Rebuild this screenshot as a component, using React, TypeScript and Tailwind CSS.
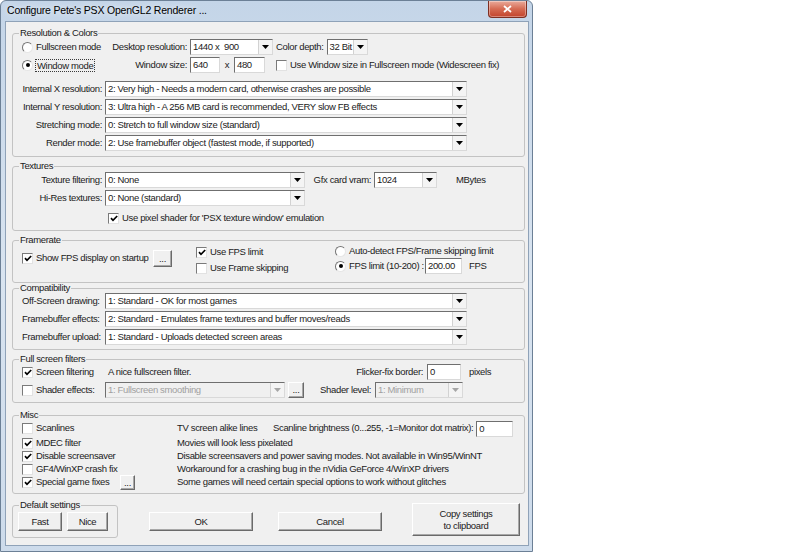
import React from "react";

type Kids = { children?: React.ReactNode; className?: string };

const Arrow = ({ disabled }: { disabled?: boolean }) => (
  <svg width="7" height="4" viewBox="0 0 7 4">
    <path d="M0 0h7L3.5 4z" fill={disabled ? "#a6a6a6" : "#000"} />
  </svg>
);

const Select = ({
  value,
  className = "",
  disabled = false,
}: {
  value: string;
  className?: string;
  disabled?: boolean;
}) => (
  <div
    className={`flex h-[16px] shrink-0 border border-t-[#6f6f6f] border-l-[#6f6f6f] border-r-[#d9d9d9] border-b-[#d9d9d9] ${
      disabled ? "bg-[#f0f0f0] text-[#a0a0a0]" : "bg-white"
    } ${className}`}
  >
    <div className="flex-1 overflow-hidden whitespace-pre pl-[2px] leading-[14px]">
      {value}
    </div>
    <div className="flex w-[14px] items-center justify-center border-l border-[#d2d2d2] bg-[#f4f4f4]">
      <Arrow disabled={disabled} />
    </div>
  </div>
);

const TextBox = ({ value, className = "" }: { value: string; className?: string }) => (
  <div
    className={`h-[16px] shrink-0 border border-t-[#6f6f6f] border-l-[#6f6f6f] border-r-[#d9d9d9] border-b-[#d9d9d9] bg-white pl-[2px] leading-[14px] ${className}`}
  >
    {value}
  </div>
);

const Check = ({ checked = false, label }: { checked?: boolean; label: string }) => (
  <div className="flex items-center">
    <div className="flex h-[11px] w-[11px] shrink-0 items-center justify-center border border-t-[#7a7a7a] border-l-[#7a7a7a] border-r-[#e2e2e2] border-b-[#e2e2e2] bg-white">
      {checked && (
        <svg width="8" height="7" viewBox="0 0 8 7">
          <path d="M1 3.2l2 2.1L7.2 1" stroke="#000" strokeWidth="1.7" fill="none" />
        </svg>
      )}
    </div>
    <span className="ml-[3px] whitespace-nowrap">{label}</span>
  </div>
);

const Radio = ({
  checked = false,
  focus = false,
  label,
}: {
  checked?: boolean;
  focus?: boolean;
  label: string;
}) => (
  <div className="flex items-center">
    <div className="flex h-[11px] w-[11px] shrink-0 items-center justify-center rounded-full border border-t-[#747474] border-l-[#747474] border-r-[#e6e6e6] border-b-[#e6e6e6] bg-white">
      {checked && <div className="h-[4px] w-[4px] rounded-full bg-black" />}
    </div>
    <span
      className={`ml-[2px] whitespace-nowrap ${
        focus ? "border border-dotted border-[#3a3a3a] px-[1px] leading-[11px]" : "px-[1px]"
      }`}
    >
      {label}
    </span>
  </div>
);

const Btn = ({ children, className = "" }: Kids) => (
  <div
    className={`flex shrink-0 items-center justify-center border border-t-white border-l-white border-r-[#6a6a6a] border-b-[#6a6a6a] bg-[#f0f0f0] text-center leading-[12px] shadow-[inset_-1px_-1px_0_#a8a8a8] ${className}`}
  >
    {children}
  </div>
);

const Group = ({ title, children, className = "" }: Kids & { title: string }) => (
  <fieldset className={`w-[513px] rounded-[3px] border border-[#c3c3c3] px-[6px] ${className}`}>
    <legend className="px-[1px] leading-[10px]">{title}</legend>
    <div className="pl-[3px]">{children}</div>
  </fieldset>
);

const ComboRow = ({
  label,
  value,
  right = false,
  className = "",
}: {
  label: string;
  value: string;
  right?: boolean;
  className?: string;
}) => (
  <div className={`flex h-[16px] items-center ${className}`}>
    <span className={`w-[80px] whitespace-nowrap ${right ? "text-right" : ""}`}>{label}</span>
    <Select value={value} className="ml-[3px] w-[362px]" />
  </div>
);

const MiscRow = ({
  checked,
  label,
  text,
}: {
  checked?: boolean;
  label: string;
  text: string;
}) => (
  <div className="flex h-[13px] items-center">
    <div className="w-[155px]">
      <Check checked={checked} label={label} />
    </div>
    <span className="whitespace-nowrap">{text}</span>
  </div>
);

const CloseButton = () => (
  <div className="mr-[2px] flex h-[17px] w-[39px] items-center justify-center self-start rounded-b-[4px] border border-t-0 border-[#7e2f22] bg-gradient-to-b from-[#e9aa9b] via-[#d56a52] to-[#c2432c] shadow-[inset_0_0_0_1px_rgba(255,255,255,0.35)]">
    <svg width="9" height="8" viewBox="0 0 9 8">
      <path d="M1 1l7 6M8 1L1 7" stroke="#fff" strokeWidth="1.8" />
    </svg>
  </div>
);

export default function App() {
  return (
    <div className="h-[552px] w-[800px] bg-white font-['Liberation_Sans',Arial,sans-serif] text-[9.5px] tracking-[-0.35px] text-[#1b1b1b]">
      <div className="flex h-[552px] w-[533px] flex-col rounded-t-[6px] border border-[#6c8096] bg-gradient-to-b from-[#c4d5e8] via-[#d9e4f0] to-[#cddbeb] pb-[5px] pl-[4px] pr-[3px]">
        {/* title bar */}
        <div className="flex h-[20px] shrink-0 items-center justify-between">
          <span className="pl-[2px] text-[10.5px] tracking-[-0.2px] text-black [text-shadow:0_0_6px_#ffffff]">
            Configure Pete's PSX OpenGL2 Renderer ...
          </span>
          <CloseButton />
        </div>

        <div className="flex-1 border border-[#8fa2b8] bg-[#f0f0f0] pl-[6px] pt-[6px]">
          <Group title="Resolution & Colors" className="pb-[5px]">
            <div className="mt-[1px] flex h-[16px] items-center">
              <div className="w-[88px]">
                <Radio label="Fullscreen mode" />
              </div>
              <span className="w-[77px] whitespace-nowrap text-right">Desktop resolution:</span>
              <Select value="1440 x  900" className="ml-[3px] w-[83px]" />
              <span className="ml-[3px] whitespace-nowrap">Color depth:</span>
              <Select value="32 Bit" className="ml-[3px] w-[41px]" />
            </div>
            <div className="mt-[2px] flex h-[16px] items-center">
              <div className="w-[88px]">
                <Radio checked focus label="Window mode" />
              </div>
              <span className="w-[77px] whitespace-nowrap text-right">Window size:</span>
              <TextBox value="640" className="ml-[3px] w-[30px]" />
              <span className="w-[14px] text-center">x</span>
              <TextBox value="480" className="w-[31px]" />
              <div className="ml-[11px]">
                <Check label="Use Window size in Fullscreen mode (Widescreen fix)" />
              </div>
            </div>
            <ComboRow
              right
              className="mt-[8px]"
              label="Internal X resolution:"
              value="2: Very high - Needs a modern card, otherwise crashes are possible"
            />
            <ComboRow
              right
              className="mt-[2px]"
              label="Internal Y resolution:"
              value="3: Ultra high - A 256 MB card is recommended, VERY slow FB effects"
            />
            <ComboRow
              right
              className="mt-[2px]"
              label="Stretching mode:"
              value="0: Stretch to full window size (standard)"
            />
            <ComboRow
              right
              className="mt-[2px]"
              label="Render mode:"
              value="2: Use framebuffer object (fastest mode, if supported)"
            />
          </Group>

          <Group title="Textures" className="mt-[4px] pb-[5px]">
            <div className="mt-[1px] flex h-[16px] items-center">
              <span className="w-[80px] text-right">Texture filtering:</span>
              <Select value="0: None" className="ml-[3px] w-[200px]" />
              <span className="w-[66px] whitespace-nowrap text-right">Gfx card vram:</span>
              <Select value="1024" className="ml-[3px] w-[63px]" />
              <span className="ml-[19px]">MBytes</span>
            </div>
            <div className="mt-[2px] flex h-[16px] items-center">
              <span className="w-[80px] text-right">Hi-Res textures:</span>
              <Select value="0: None (standard)" className="ml-[3px] w-[200px]" />
            </div>
            <div className="mt-[5px] flex h-[14px] items-center pl-[86px]">
              <Check checked label="Use pixel shader for 'PSX texture window' emulation" />
            </div>
          </Group>

          <Group title="Framerate" className="mt-[4px] pb-[7px]">
            <div className="flex">
              <div className="mt-[5px] flex h-[17px] w-[131px] items-center">
                <Check checked label="Show FPS display on startup" />
              </div>
              <Btn className="mt-[5px] h-[17px] w-[19px]">...</Btn>
              <div className="ml-[24px] flex w-[139px] flex-col">
                <div className="flex h-[14px] items-center">
                  <Check checked label="Use FPS limit" />
                </div>
                <div className="mt-[2px] flex h-[14px] items-center">
                  <Check label="Use Frame skipping" />
                </div>
              </div>
              <div className="-mt-[1px] flex flex-col">
                <div className="flex h-[14px] items-center">
                  <Radio label="Auto-detect FPS/Frame skipping limit" />
                </div>
                <div className="flex h-[16px] items-center">
                  <div className="w-[90px]">
                    <Radio checked label="FPS limit (10-200) :" />
                  </div>
                  <TextBox value="200.00" className="w-[37px]" />
                  <span className="ml-[7px]">FPS</span>
                </div>
              </div>
            </div>
          </Group>

          <Group title="Compatibility" className="pb-[4px]">
            <ComboRow label="Off-Screen drawing:" value="1: Standard - OK for most games" />
            <ComboRow
              className="mt-[2px]"
              label="Framebuffer effects:"
              value="2: Standard - Emulates frame textures and buffer moves/reads"
            />
            <ComboRow
              className="mt-[2px]"
              label="Framebuffer upload:"
              value="1: Standard - Uploads detected screen areas"
            />
          </Group>

          <Group title="Full screen filters" className="mt-[4px] pb-[4px]">
            <div className="flex h-[16px] items-center">
              <div className="w-[86px]">
                <Check checked label="Screen filtering" />
              </div>
              <span className="w-[232px]">A nice fullscreen filter.</span>
              <span className="w-[83px] whitespace-nowrap text-right">Flicker-fix border:</span>
              <TextBox value="0" className="ml-[4px] w-[34px]" />
              <span className="ml-[8px]">pixels</span>
            </div>
            <div className="mt-[2px] flex h-[16px] items-center">
              <div className="w-[83px]">
                <Check label="Shader effects:" />
              </div>
              <Select disabled value="1: Fullscreen smoothing" className="w-[180px]" />
              <Btn className="ml-[3px] h-[16px] w-[16px]">...</Btn>
              <span className="w-[67px] whitespace-nowrap text-right">Shader level:</span>
              <Select disabled value="1: Minimum" className="ml-[4px] w-[88px]" />
            </div>
          </Group>

          <Group title="Misc" className="mt-[7px] pb-[4px]">
            <div className="flex h-[17px] items-center">
              <div className="w-[155px]">
                <Check label="Scanlines" />
              </div>
              <span className="w-[96px] whitespace-nowrap">TV screen alike lines</span>
              <span className="whitespace-nowrap">
                Scanline brightness (0...255, -1=Monitor dot matrix):
              </span>
              <TextBox value="0" className="ml-[3px] w-[37px]" />
            </div>
            <MiscRow checked label="MDEC filter" text="Movies will look less pixelated" />
            <MiscRow
              checked
              label="Disable screensaver"
              text="Disable screensavers and power saving modes. Not available in Win95/WinNT"
            />
            <MiscRow
              label="GF4/WinXP crash fix"
              text="Workaround for a crashing bug in the nVidia GeForce 4/WinXP drivers"
            />
            <div className="flex h-[13px] items-center">
              <div className="w-[98px]">
                <Check checked label="Special game fixes" />
              </div>
              <Btn className="h-[15px] w-[15px]">...</Btn>
              <span className="ml-[42px] whitespace-nowrap">
                Some games will need certain special options to work without glitches
              </span>
            </div>
          </Group>

          <div className="mt-[6px] flex items-start">
            <fieldset className="w-[106px] rounded-[3px] border border-[#c3c3c3] px-[6px] pb-[6px]">
              <legend className="px-[1px] leading-[10px]">Default settings</legend>
              <div className="-ml-[1px] mt-[2px] flex">
                <Btn className="h-[19px] w-[44px]">Fast</Btn>
                <Btn className="ml-[5px] h-[19px] w-[41px]">Nice</Btn>
              </div>
            </fieldset>
            <Btn className="ml-[31px] mt-[12px] h-[19px] w-[104px]">OK</Btn>
            <Btn className="ml-[25px] mt-[12px] h-[19px] w-[104px]">Cancel</Btn>
            <Btn className="ml-[30px] mt-[3px] h-[33px] w-[108px]">
              Copy settings
              <br />
              to clipboard
            </Btn>
          </div>
        </div>
      </div>
    </div>
  );
}
